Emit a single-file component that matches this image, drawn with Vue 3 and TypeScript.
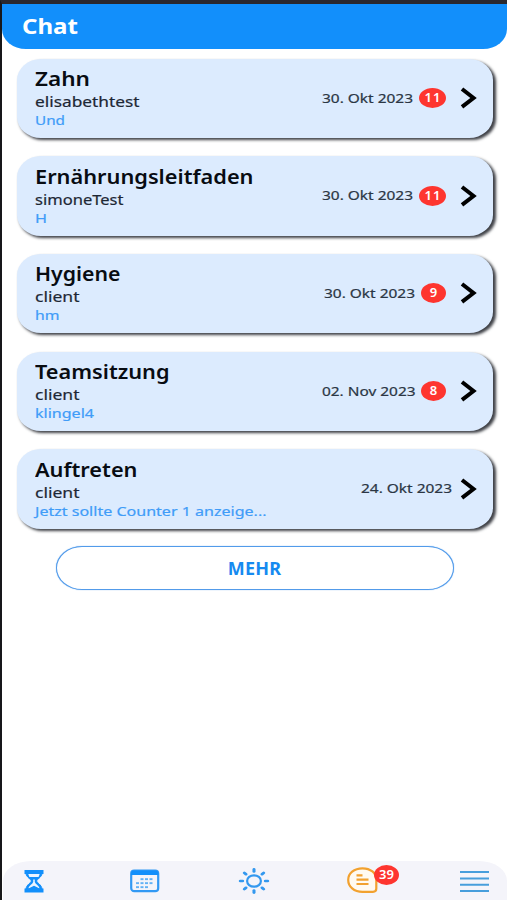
<script setup lang="ts">
import type { Directive } from 'vue'

interface Line {
  text: string
  width: number
}

interface Chat {
  title: Line
  sender: Line
  message: Line
  date: Line
  unread: number
}

// Stretches a label horizontally until it fills the given width.
const vFit: Directive<HTMLElement, number> = {
  mounted(el, binding) {
    el.style.transform = `scaleX(${binding.value / el.getBoundingClientRect().width})`
  },
}

const chats: Chat[] = [
  {
    title: { text: 'Zahn', width: 55 },
    sender: { text: 'elisabethtest', width: 104.5 },
    message: { text: 'Und', width: 30 },
    date: { text: '30. Okt 2023', width: 91 },
    unread: 11,
  },
  {
    title: { text: 'Ernährungsleitfaden', width: 218.5 },
    sender: { text: 'simoneTest', width: 88.5 },
    message: { text: 'H', width: 12 },
    date: { text: '30. Okt 2023', width: 91 },
    unread: 11,
  },
  {
    title: { text: 'Hygiene', width: 85.5 },
    sender: { text: 'client', width: 44.5 },
    message: { text: 'hm', width: 24.5 },
    date: { text: '30. Okt 2023', width: 91 },
    unread: 9,
  },
  {
    title: { text: 'Teamsitzung', width: 134.5 },
    sender: { text: 'client', width: 44.5 },
    message: { text: 'klingel4', width: 59 },
    date: { text: '02. Nov 2023', width: 93.5 },
    unread: 8,
  },
  {
    title: { text: 'Auftreten', width: 102.5 },
    sender: { text: 'client', width: 44.5 },
    message: { text: 'Jetzt sollte Counter 1 anzeige...', width: 231.5 },
    date: { text: '24. Okt 2023', width: 91 },
    unread: 0,
  },
]

const dots = [
  [10.5, 10], [15, 10], [19.5, 10],
  [6, 14], [10.5, 14], [15, 14], [19.5, 14],
  [6, 18], [10.5, 18], [15, 18],
]
const rays = [0, 45, 90, 135, 180, 225, 270, 315]
</script>

<template>
  <div class="screen">
    <header class="header">
      <h1 v-fit="56" class="fit">Chat</h1>
    </header>

    <main class="list">
      <article v-for="chat in chats" :key="chat.title.text" class="card">
        <div class="info">
          <h2 v-fit="chat.title.width" class="fit title">{{ chat.title.text }}</h2>
          <p v-fit="chat.sender.width" class="fit sender">{{ chat.sender.text }}</p>
          <p v-fit="chat.message.width" class="fit message">{{ chat.message.text }}</p>
        </div>
        <div class="meta">
          <div class="date" :style="{ width: chat.date.width + 'px' }">
            <time v-fit="chat.date.width" class="fit">{{ chat.date.text }}</time>
          </div>
          <span v-if="chat.unread" class="badge" :class="{ wide: chat.unread > 9 }">{{ chat.unread }}</span>
          <svg class="chevron" :class="{ near: !chat.unread }" width="17" height="22" viewBox="0 0 17 22">
            <path d="M2 2 13.500 11 2 19.800" fill="none" stroke="#000" stroke-width="4" />
          </svg>
        </div>
      </article>
      <button class="more" type="button"><span>MEHR</span></button>
    </main>

    <nav class="tabs">
      <a class="tab hourglass">
        <svg width="20" height="24" viewBox="0 0 20 24">
          <path d="M1.800 4C2.600 9 7.300 10 7.300 12S2.600 15 1.800 20.500H18.200C17.400 15 12.700 14 12.700 12S17.400 9 18.200 4Z" fill="#128ffb" stroke="#128ffb" stroke-width="1" />
          <path d="M4.200 4.800H15.800L14.600 8H5.400Z" fill="#eaf4ff" />
          <path d="M4.400 19.600C5 16.500 8.300 15.500 9.200 13V10.500H10.800V13C11.700 15.500 15 16.500 15.600 19.600L10 16.800Z" fill="#eaf4ff" />
          <path d="M.5 1H19.500V5H.5ZM.5 19.600H19.500V23.500H.5Z" fill="#128ffb" />
        </svg>
      </a>
      <a class="tab calendar">
        <svg width="30" height="24" viewBox="0 0 30 24">
          <rect x="1.200" y="1.600" width="27" height="20.600" rx="3" fill="none" stroke="#3299f4" stroke-width="2.200" />
          <path d="M1 6V4.500Q1 1.500 4 1.500H25.500Q28.400 1.500 28.400 4.500V6Z" fill="#128ffb" />
          <rect v-for="(dot, i) in dots" :key="i" :x="dot[0]" :y="dot[1] - 0.8" width="3" height="1.900" fill="#62b1f5" />
        </svg>
      </a>
      <a class="tab sun">
        <svg width="32" height="28" viewBox="-16 -14 32 28">
          <ellipse rx="6.900" ry="5.700" fill="none" stroke="#3398ef" stroke-width="2.200" />
          <g transform="scale(1.180 1)" stroke="#3398ef" stroke-width="2.600" stroke-linecap="round">
            <path v-for="angle in rays" :key="angle" d="M9.600 0H11.600" :transform="`rotate(${angle})`" />
          </g>
        </svg>
      </a>
      <a class="tab chat">
        <svg width="32" height="28" viewBox="0 0 32 28">
          <path d="M15.500 2.300C23.500 2.300 29.300 7 29.300 13.500V22.500Q29.300 25.800 26 25.800H15.500C7 25.800 1.200 20.500 1.200 13.900S7 2.300 15.500 2.300Z" fill="#fffaf1" stroke="#f2a12f" stroke-width="2.200" />
          <path d="M9.500 9.400H15.500M9.500 13.700H21.500M9.500 18H21.500" fill="none" stroke="#f2a12f" stroke-width="2.200" />
        </svg>
        <span class="badge count">39</span>
      </a>
      <a class="tab menu">
        <svg width="29" height="24" viewBox="0 0 29 24">
          <path d="M0 3H29M0 9.500H29M0 15.700H29M0 22H29" stroke="#479edc" stroke-width="2" />
        </svg>
      </a>
    </nav>
  </div>
</template>

<style>
body {
  margin: 0;
  background: #fff;
}
</style>

<style scoped>
.screen {
  box-sizing: border-box;
  height: 900px;
  border-top: 4px solid #2a282e;
  border-left: 2px solid #17171a;
  display: flex;
  flex-direction: column;
  overflow: hidden;
  background: #fff;
  font-family: 'Noto Sans', 'Open Sans', sans-serif;
}

h1,
h2,
p {
  margin: 0;
}

.fit {
  width: max-content;
  transform-origin: left center;
  white-space: nowrap;
}

.header {
  box-sizing: border-box;
  height: 44.500px;
  padding: 7px 20px;
  background: #128ffb;
  border-radius: 0 0 24px 24px / 0 0 20px 20px;
}

.header h1 {
  color: #fff;
  font-size: 22px;
  font-weight: 700;
  line-height: 28px;
}

.list {
  flex: 1;
  display: flex;
  flex-direction: column;
  gap: 18.200px;
  padding: 10px 15px 0;
}

.card {
  box-sizing: border-box;
  height: 79.500px;
  padding: 7.500px 16px 0 18px;
  display: flex;
  justify-content: space-between;
  background: #dcebfe;
  border-radius: 24px / 21px;
  box-shadow: 2.500px 2px 3px 0 #3e4046;
  width: 476px;
}

.title {
  font-size: 20px;
  font-weight: 600;
  line-height: 25px;
  color: #080c12;
}

.sender {
  font-size: 15px;
  line-height: 20px;
  color: #1d2734;
  -webkit-text-stroke: 0.200px #1d2734;
}

.message {
  font-size: 13px;
  line-height: 19px;
  color: #409cf8;
  -webkit-text-stroke: 0.200px #409cf8;
}

.meta {
  height: 64px;
  display: flex;
  align-items: center;
}

.date {
  padding-top: 1px;
  font-size: 12.500px;
  line-height: 18px;
  color: #2b3644;
  -webkit-text-stroke: 0.200px #2b3644;
}

.date .fit {
  display: block;
}

.badge {
  box-sizing: border-box;
  width: 25px;
  height: 20px;
  margin-left: 6px;
  border-radius: 50%;
  background: #fe352f;
  color: #fff;
  font-size: 13px;
  font-weight: 600;
  line-height: 19px;
  text-align: center;
}

.wide {
  width: 27px;
  letter-spacing: 1px;
  padding-left: 1px;
}

.chevron {
  margin-left: 14px;
}

.near {
  margin-left: 8px;
}

.more {
  box-sizing: border-box;
  width: 398px;
  height: 44px;
  margin: -1px 0 0 38.500px;
  padding: 0;
  border: 1.500px solid #529bea;
  box-shadow: 0 0 1px #529bea;
  border-radius: 26px / 22px;
  background: #fff;
  color: #168af0;
  font: 700 18px/40px 'Noto Sans', sans-serif;
  letter-spacing: 0.200px;
}

.tabs {
  box-sizing: border-box;
  height: 39px;
  margin-left: 1px;
  padding: 0 18px 0 21px;
  display: flex;
  align-items: center;
  background: #f4f4fa;
  border-radius: 28px 28px 0 0 / 20px 20px 0 0;
}

.tab {
  display: flex;
  align-items: center;
}

.tab svg {
  display: block;
}

.calendar {
  margin-left: 86px;
}

.sun {
  margin-left: 78px;
}

.chat {
  position: relative;
  margin-left: 77px;
  margin-top: -2px;
}

.menu {
  margin-left: auto;
}

.count {
  position: absolute;
  top: -1px;
  left: 27px;
  margin: 0;
}
</style>
